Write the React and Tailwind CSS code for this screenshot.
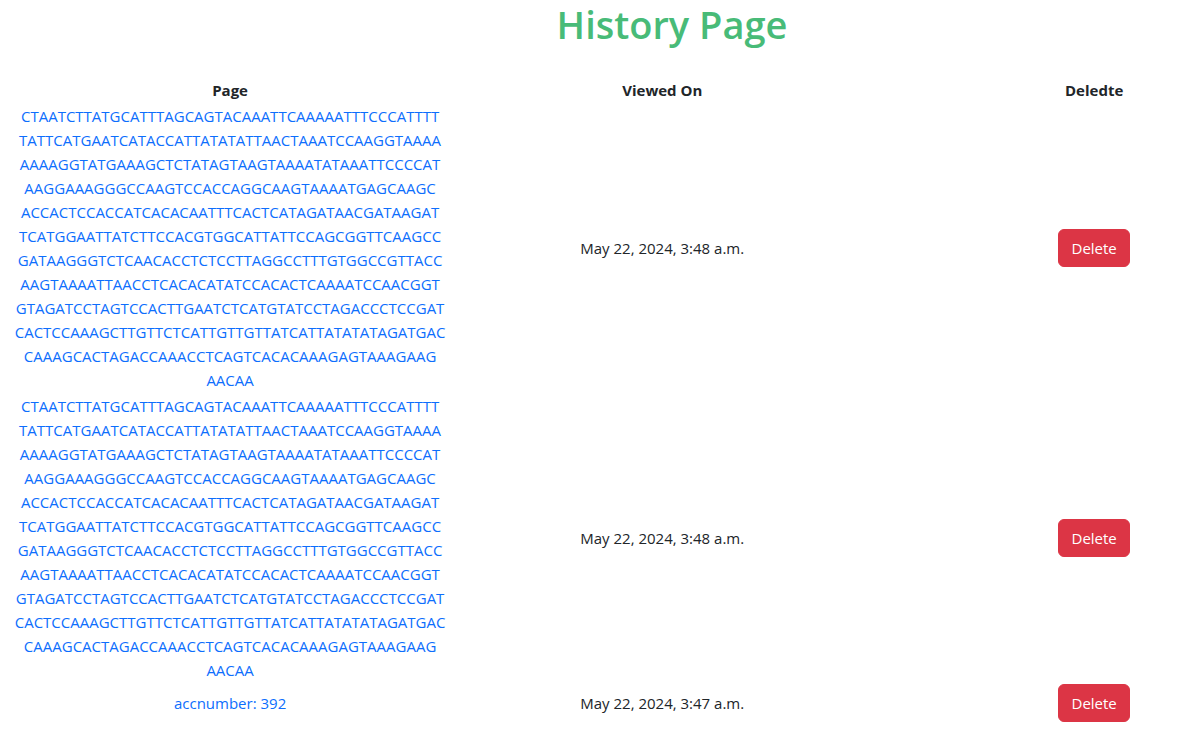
const SEQUENCE = [
  "CTAATCTTATGCATTTAGCAGTACAAATTCAAAAATTTCCCATTTT",
  "TATTCATGAATCATACCATTATATATTAACTAAATCCAAGGTAAAA",
  "AAAAGGTATGAAAGCTCTATAGTAAGTAAAATATAAATTCCCCAT",
  "AAGGAAAGGGCCAAGTCCACCAGGCAAGTAAAATGAGCAAGC",
  "ACCACTCCACCATCACACAATTTCACTCATAGATAACGATAAGAT",
  "TCATGGAATTATCTTCCACGTGGCATTATTCCAGCGGTTCAAGCC",
  "GATAAGGGTCTCAACACCTCTCCTTAGGCCTTTGTGGCCGTTACC",
  "AAGTAAAATTAACCTCACACATATCCACACTCAAAATCCAACGGT",
  "GTAGATCCTAGTCCACTTGAATCTCATGTATCCTAGACCCTCCGAT",
  "CACTCCAAAGCTTGTTCTCATTGTTGTTATCATTATATATAGATGAC",
  "CAAAGCACTAGACCAAACCTCAGTCACACAAAGAGTAAAGAAG",
  "AACAA",
];

const ENTRIES = [
  { id: 3, lines: SEQUENCE, viewedOn: "May 22, 2024, 3:48 a.m." },
  { id: 2, lines: SEQUENCE, viewedOn: "May 22, 2024, 3:48 a.m." },
  { id: 1, lines: ["accnumber: 392"], viewedOn: "May 22, 2024, 3:47 a.m." },
];

function HistoryRow({ entry }) {
  return (
    <tr>
      <td className="p-0">
        <a href="#" className="text-[#0d6efd]">
          {entry.lines.map((line, i) => (
            <span key={i} className="block whitespace-nowrap">{line}</span>
          ))}
        </a>
      </td>
      <td className="p-0">{entry.viewedOn}</td>
      <td className="p-0 pl-32">
        <button
          type="button"
          className="w-18 cursor-pointer rounded-md border border-[#dc3545] bg-[#dc3545] py-1.5 text-center text-white hover:bg-[#bb2d3b]"
        >
          Delete
        </button>
      </td>
    </tr>
  );
}

export default function App() {
  return (
    <main className="min-h-screen bg-white pl-3.5 font-['Segoe_UI','Open_Sans',sans-serif] text-[15px] leading-6 text-[#212529]">
      <h1 className="pb-7 pl-[148px] text-center text-[38px] leading-12 font-semibold text-[#48bb78]">
        History Page
      </h1>
      <table className="w-full table-fixed border-separate border-spacing-x-0 border-spacing-y-0.5 text-center">
        <thead>
          <tr>
            <th scope="col" className="w-[37%] p-0 font-bold">Page</th>
            <th scope="col" className="w-[37%] p-0 font-bold">Viewed On</th>
            <th scope="col" className="w-[26%] p-0 pl-32 font-bold">Deledte</th>
          </tr>
        </thead>
        <tbody>
          {ENTRIES.map((entry) => (
            <HistoryRow key={entry.id} entry={entry} />
          ))}
        </tbody>
      </table>
    </main>
  );
}
